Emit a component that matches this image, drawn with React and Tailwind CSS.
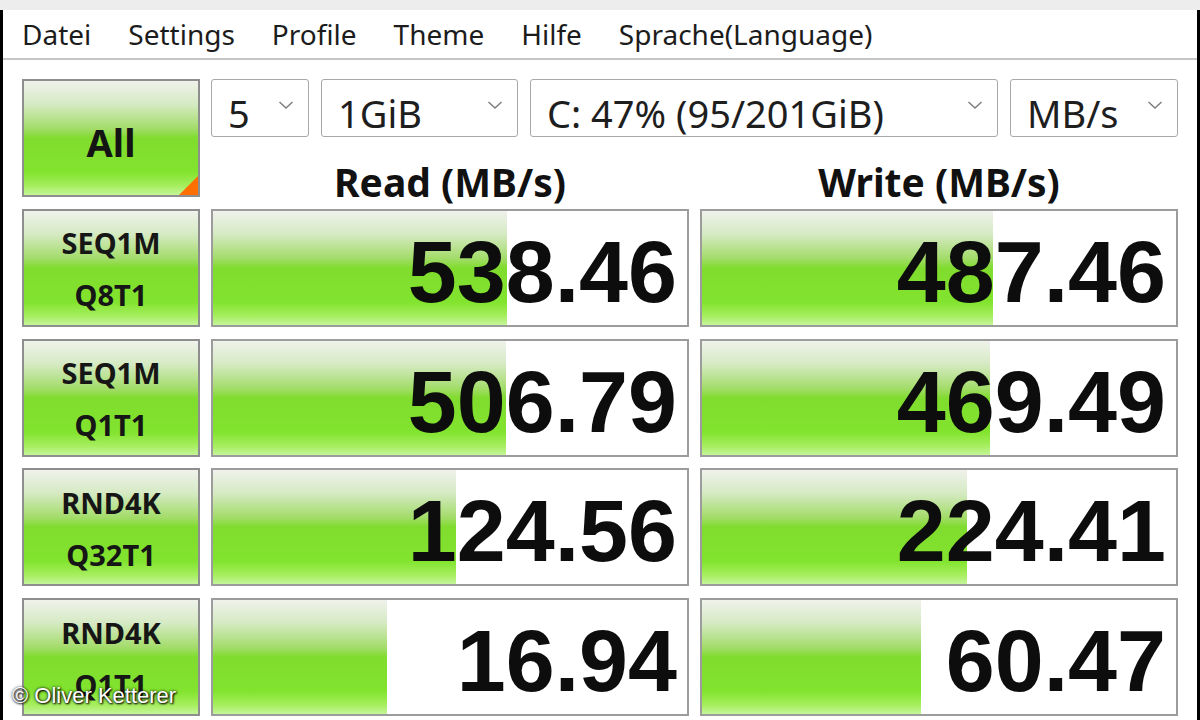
import React from 'react'

const green =
  'bg-[linear-gradient(to_bottom,#eff2eb_0%,#d6eac4_20%,#a2dc68_42%,#80dc2e_50%,#82e42e_80%,#a6ee5e_92%,#c4f59a_100%)]'

const menu = ['Datei', 'Settings', 'Profile', 'Theme', 'Hilfe', 'Sprache(Language)']

const rows = [
  { a: 'SEQ1M', b: 'Q8T1', read: '538.46', rp: 62, write: '487.46', wp: 61.4 },
  { a: 'SEQ1M', b: 'Q1T1', read: '506.79', rp: 61.8, write: '469.49', wp: 60.8 },
  { a: 'RND4K', b: 'Q32T1', read: '124.56', rp: 51.3, write: '224.41', wp: 55.9 },
  { a: 'RND4K', b: 'Q1T1', read: '16.94', rp: 36.7, write: '60.47', wp: 46.2 },
]

const Chevron = () => (
  <svg width="16" height="10" viewBox="0 0 16 10" className="shrink-0 mb-[6px]">
    <polyline points="1.5,2 8,8 14.5,2" fill="none" stroke="#7c7c7c" strokeWidth="1.4" />
  </svg>
)

const Select = ({ value, w }) => (
  <div className={`${w} h-[58px] flex items-center justify-between pl-4 pr-[14px] bg-white border-[1.5px] border-[#a8a8a8] rounded-[3px]`}>
    <span className="mt-[10px] text-[38px] leading-none text-[#1e1e1e] whitespace-nowrap">{value}</span>
    <Chevron />
  </div>
)

const ValueCell = ({ value, pct }) => (
  <div className="relative h-[118px] bg-white border-2 border-[#9c9c9c] overflow-hidden flex items-center justify-end pr-[10px] pt-2">
    <div className={`absolute left-0 top-0 bottom-0 ${green}`} style={{ width: pct + '%' }} />
    <span className="relative font-['Liberation_Sans',Arial,sans-serif] font-bold text-[88px] leading-none text-[#0d0d0d]">
      {value}
    </span>
  </div>
)

export default function App() {
  return (
    <div className="relative w-[1200px] h-[720px] overflow-hidden bg-white font-['Noto_Sans',sans-serif]">
      <div className="h-[10px] bg-[#ededed]" />
      <div className="h-[710px] border-x-[3px] border-black flex flex-col">
        <div className="h-[50px] flex items-center gap-[37px] pl-[19px] text-[28px] text-[#1c1c1c] border-b-2 border-[#c6c6c6] shrink-0">
          {menu.map((m) => (
            <span key={m}>{m}</span>
          ))}
        </div>

        <div className="pl-[19px] pt-[19px] grid grid-cols-[178px_478px_478px] gap-x-[11px] gap-y-[11.75px]">
          <div className={`relative h-[118px] border-2 border-[#8e8e8e] ${green} flex items-center justify-center`}>
            <span className="font-bold text-[38px] leading-none text-[#141414] mt-[8px]">All</span>
            <div className="absolute right-0 bottom-0 w-[19px] h-[19px] bg-[#ff6f00] [clip-path:polygon(100%_0,100%_100%,0_100%)]" />
          </div>

          <div className="col-span-2 h-[118px] flex flex-col">
            <div className="flex gap-3">
              <Select value="5" w="w-[98px]" />
              <Select value="1GiB" w="w-[197px]" />
              <Select value="C: 47% (95/201GiB)" w="w-[468px]" />
              <Select value="MB/s" w="w-[168px]" />
            </div>
            <div className="h-[60px] grid grid-cols-2 gap-x-[11px] font-bold text-[39px] leading-none text-[#111]">
              <div className="pt-[25px] text-center whitespace-nowrap">Read (MB/s)</div>
              <div className="pt-[25px] text-center whitespace-nowrap">Write (MB/s)</div>
            </div>
          </div>

          {rows.map((r, i) => (
            <React.Fragment key={i}>
              <div className={`h-[118px] border-2 border-[#8e8e8e] ${green} flex flex-col items-center justify-center font-bold text-[29px] leading-[52px] text-[#161616] pt-[3px]`}>
                <span>{r.a}</span>
                <span>{r.b}</span>
              </div>
              <ValueCell value={r.read} pct={r.rp} />
              <ValueCell value={r.write} pct={r.wp} />
            </React.Fragment>
          ))}
        </div>
      </div>

      <div className="absolute left-[12px] bottom-[13px] font-['Liberation_Sans',Arial,sans-serif] text-[22px] leading-none text-white [text-shadow:0_0_3px_#000,1px_1px_2px_#000]">
        © Oliver Ketterer
      </div>
    </div>
  )
}
